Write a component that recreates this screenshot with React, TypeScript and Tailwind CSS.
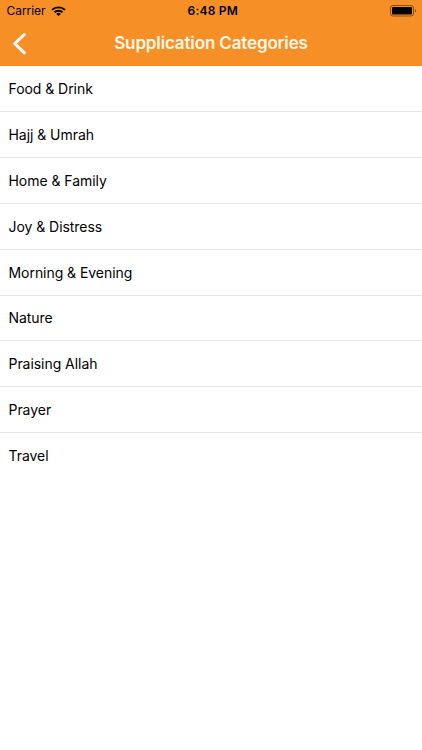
const categories = [
  "Food & Drink",
  "Hajj & Umrah",
  "Home & Family",
  "Joy & Distress",
  "Morning & Evening",
  "Nature",
  "Praising Allah",
  "Prayer",
  "Travel",
];

function StatusBar() {
  return (
    <div className="grid grid-cols-3 items-center h-[22px] pl-[6.5px] pr-[5px] text-black">
      <div className="flex items-center gap-[6px]">
        <span className="text-[12px] leading-[22px] tracking-[-0.05px]">Carrier</span>
        <svg width="15" height="10" viewBox="0 0 15 11" preserveAspectRatio="none" fill="none" stroke="currentColor" strokeWidth="2.1">
          <path d="M1 4.2a9.2 9.2 0 0 1 13 0" />
          <path d="M3.500 6.900a5.700 5.700 0 0 1 8 0" />
          <path d="M7.500 11L5.200 8.700a3.200 3.200 0 0 1 4.600 0z" fill="currentColor" stroke="none" />
        </svg>
      </div>
      <span className="pl-[2px] text-center text-[12px] leading-[22px] font-semibold tracking-[0.2px]">6:48 PM</span>
      <svg className="justify-self-end" width="27" height="12" viewBox="0 0 27 12" fill="none">
        <rect x="0.5" y="0.5" width="23" height="10.500" rx="2.500" stroke="black" strokeOpacity="0.45" />
        <rect x="2" y="2" width="20" height="7.500" rx="1" fill="black" />
        <path d="M25 4v3.600c1.400-.5 1.400-3.100 0-3.600z" fill="black" fillOpacity="0.5" />
      </svg>
    </div>
  );
}

export default function App() {
  return (
    <div className="h-[750px] w-full overflow-hidden bg-white font-['Inter',sans-serif]">
      <header className="h-[66px] bg-[#f69026]">
        <StatusBar />
        <div className="grid grid-cols-[40px_1fr_40px] items-center h-[43px]">
          <button aria-label="Back" className="pl-[12px]">
            <svg
              width="15"
              height="22"
              viewBox="0 0 15 22"
              fill="none"
              stroke="white"
              strokeWidth="3"
              strokeLinecap="round"
              strokeLinejoin="round"
            >
              <path d="M12.300 1.500L2.800 10.700l9.500 9.200" />
            </svg>
          </button>
          <h1 className="text-center text-[17px] font-semibold tracking-[-0.14px] text-[#fff8ea]">
            Supplication Categories
          </h1>
        </div>
      </header>
      <ul>
        {categories.map((name) => (
          <li
            key={name}
            className="flex items-center h-[45.92px] px-[8.5px] border-b border-[#e6e6e8] last:border-b-transparent text-[14px] tracking-[-0.05px] text-black"
          >
            {name}
          </li>
        ))}
      </ul>
    </div>
  );
}
